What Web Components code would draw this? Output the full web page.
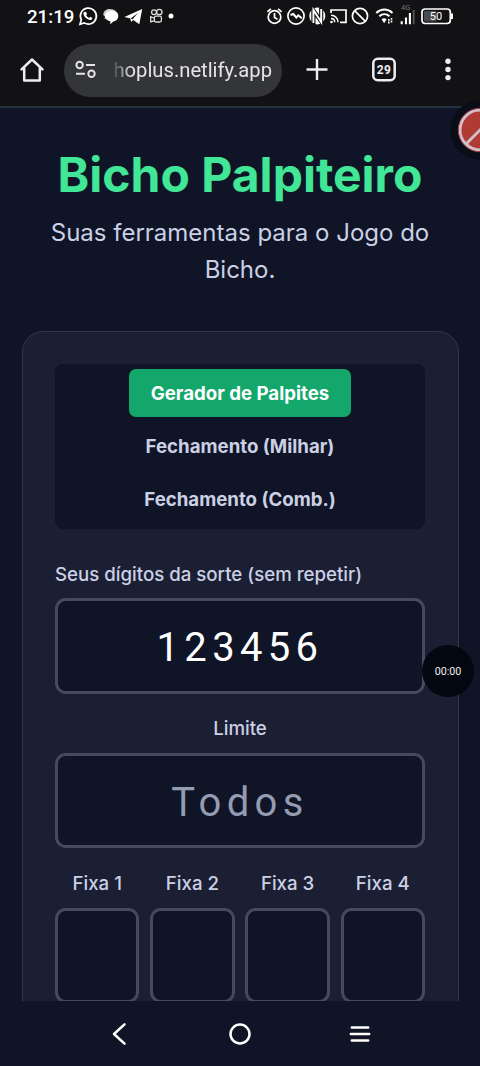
<!DOCTYPE html>
<html lang="pt-BR">
<head>
<meta charset="utf-8">
<title>Bicho Palpiteiro</title>
<style>
html,body{margin:0;height:100%;overflow:hidden;background:#0f1527}
body{font-family:Inter,"Noto Sans",sans-serif}
</style>
</head>
<body>
<phone-screen></phone-screen>
<script>
function define(name, markup) {
  const t = document.createElement('template');
  t.innerHTML = markup;
  customElements.define(name, class extends HTMLElement {
    constructor() {
      super();
      this.attachShadow({mode: 'open'}).append(t.content.cloneNode(true));
    }
  });
}

define('status-bar', `
<style>
:host{display:flex;justify-content:space-between;height:34px;box-sizing:border-box;padding:0 25px 0 27px;color:#fff}
.l{display:flex}
time{font:500 18.700px/35px Roboto,sans-serif;width:50px;white-space:nowrap}
svg{display:block}
text{font-family:Roboto,sans-serif}
</style>
<div class="l"><time>21:19</time>
<svg width="100" height="34" viewBox="77 0 100 34" fill="none" stroke="#fff">
  <path d="M80 24.3l1.3-4.5a8 8 0 1 1 2.9 3.1z" stroke-width="1.7"/>
  <path d="M84.8 11.8l1.3.1.9 2.2-.8 1.1c.8 1.4 1.8 2.2 3 2.7l1-1.1 2.2 1.1c0 1.2-.9 2.1-2.1 2.1-3.3 0-6.9-3.8-6.9-6.4 0-.8.5-1.5 1.400-1.800z" fill="#fff" stroke="none"/>
  <path d="M103.300 15c0-3.500 2.500-6 6.200-6 3.300 0 6.300 1 7 3.500l-2 5-10.300 1.300 1-1.800z" fill="#ccc" stroke="none"/>
  <path d="M105 15.800c0-3.300 2.700-5.400 6.700-5.400s6.600 2.300 6.600 5.400-2.400 5.600-5 5.800l-3 2.700v-3c-3-.6-5.300-2.300-5.300-5.500z" fill="#fff" stroke="none"/>
  <path d="M124.400 16.900L142.200 9l-2.900 15.200-6-4.300-2.200 2.200-.8-3.600zM130.600 18.400l7.400-5.400-5.400 6.300z" fill="#fff" fill-rule="evenodd" stroke="none"/>
  <g stroke="#ddd" stroke-width="1.300"><circle cx="154" cy="12.200" r="2.400"/><circle cx="159.300" cy="12" r="2.700"/><rect x="154.400" y="16.200" width="7" height="5.800" rx="1.500"/><path d="M154 18l-3.300-1.200v5l3.300-1"/></g>
  <circle cx="171" cy="16" r="2.500" fill="#fff" stroke="none"/>
</svg></div>
<svg width="188" height="34" viewBox="267 0 188 34" fill="none" stroke="#fff" stroke-width="1.700">
  <circle cx="274.500" cy="17" r="6.300"/><path d="M274.500 13v4.500l3 1.700M267.400 11.800l3.500-3M281.600 11.800l-3.500-3"/>
  <circle cx="296" cy="16" r="8.100"/><path d="M290.500 15l2.800-1 3 3.500 2-2.200 3.500 3" stroke-width="2"/>
  <ellipse cx="317.300" cy="16" rx="8" ry="8.400" fill="#fff" stroke="none"/>
  <path d="M313.400 24V10.500l7.800 11V8" stroke="#121214" stroke-width="4.200"/><path d="M313.400 23V10l7.800 12V9" stroke-width="1.900"/>
  <path d="M331 13V10h15v12.300h-6"/><path d="M331 15.300c4 0 7 3 7 7M331 18.600c2.300 0 3.700 1.500 3.700 3.700" stroke-width="1.500"/><circle cx="331.500" cy="22" r="1.300" fill="#fff" stroke="none"/>
  <circle cx="360" cy="16" r="7.600"/><path d="M354.600 10.600l10.800 10.800"/>
  <path d="M376.300 12.900c4.700-4.400 11.500-4.400 16.200 0M379.300 16.300c3-2.800 7.200-2.800 10.200 0" stroke-width="2"/><path d="M381.600 19.300c1.500-1.400 3.500-1.400 5 0l-2.500 4z" fill="#fff" stroke="none"/><path d="M388.800 19v4.500M391.500 18v4.500" stroke-width="1.600" stroke-dasharray="1.800 .8"/>
  <text x="401" y="10" font-size="7.500" fill="#777" stroke="none">4G</text>
  <path d="M401.700 21.300v2.900M406 17.500v6.700M409.900 13v11.200" stroke-width="2.100"/><path d="M413.700 10V24.200" stroke="#555" stroke-width="1.800"/>
  <rect x="422" y="9" width="28.300" height="14.500" rx="3.200"/><rect x="424" y="11" width="12.500" height="10.500" rx="1" fill="#4a4a4c" stroke="none"/><path d="M452 13.500v5.500" stroke-width="2"/>
  <text x="436" y="20.300" text-anchor="middle" font-size="11" fill="#fff" stroke="none">50</text>
</svg>`);

define('browser-bar', `
<style>
:host{display:flex;align-items:center;height:72px;box-sizing:border-box;padding:0 20px 0 18px}
.pill{display:flex;align-items:center;width:218px;height:53px;border-radius:27px;background:#343538;margin-left:18px;box-sizing:border-box;padding-left:11px}
.u{font:400 20.200px/28px Roboto,sans-serif;color:#e4e4e8;margin-left:14px;width:161px;display:flex;justify-content:flex-end;white-space:nowrap;-webkit-mask:linear-gradient(90deg,transparent,#000 20px);mask:linear-gradient(90deg,transparent,#000 20px)}
svg{display:block;flex:none}
.plus{margin-left:23px}.tabs{margin-left:42px}.dots{margin-left:47px}
</style>
<svg width="28" height="28" viewBox="0 0 28 28" fill="none" stroke="#ededf2" stroke-width="2.500" stroke-linejoin="round" stroke-linecap="round"><path d="M3.500 13.300L14 3.500l10.500 9.800M6.200 12v12.500h15.600V12"/></svg>
<div class="pill"><svg width="22" height="20" viewBox="0 0 22 20" fill="none" stroke="#e4e4e8" stroke-width="2"><circle cx="4.600" cy="5" r="3.200"/><path d="M11 5h9M1 13.800h9"/><circle cx="16.500" cy="13.800" r="3.200"/></svg><div class="u">hoplus.netlify.app</div></div>
<svg class="plus" width="24" height="24" viewBox="0 0 24 24" stroke="#ededf2" stroke-width="2.400"><path d="M12 1v21M1.500 11.500h21"/></svg>
<svg class="tabs" width="26" height="26" viewBox="0 0 26 26"><rect x="2.300" y="1.800" width="21.400" height="21.400" rx="4.500" fill="none" stroke="#ededf2" stroke-width="2.500"/><text x="13" y="16.800" text-anchor="middle" font-family="Roboto,sans-serif" font-weight="700" font-size="12" letter-spacing=".3" fill="#ededf2">29</text></svg>
<svg class="dots" width="8" height="24" viewBox="0 0 8 24" fill="#ededf2"><circle cx="4" cy="3.200" r="2.700"/><circle cx="4" cy="11.500" r="2.700"/><circle cx="4" cy="19.600" r="2.700"/></svg>`);

define('page-heading', `
<style>
:host{display:block;text-align:center;padding-top:40px}
h1{margin:0;font-size:48px;line-height:53.300px;font-weight:700;color:#41e696;white-space:nowrap}
p{margin:12.700px 21px 0;font-size:24px;line-height:37.330px;color:#cbd0e5}
</style>
<h1><slot name="title"></slot></h1><p><slot></slot></p>`);

define('tab-item', `
<style>
:host{display:block;height:48px;line-height:48px;padding:0 21.300px;border-radius:7px;font-size:18.670px;font-weight:700;color:#cbd0e5;white-space:nowrap}
:host([active]){background:#13a76c;color:#fff;line-height:49px}
</style><slot></slot>`);

define('tab-list', `
<style>
:host{display:flex;flex-direction:column;align-items:center;gap:5.300px;padding:5.300px;height:165px;box-sizing:border-box;border-radius:8px;background:#0f1426}
</style><slot></slot>`);

define('form-field', `
<style>
:host{display:block;min-width:0;text-align:center}
.label{display:block;font-size:18.670px;line-height:26.670px;font-weight:500;color:#cbd0e5;white-space:nowrap}
:host([left]) .label{text-align:left}
.box{margin-top:10px;height:95.500px;box-sizing:border-box;border:3px solid #454a5e;border-radius:10.700px;background:#0f1426;font:400 40px/94px Roboto,sans-serif;letter-spacing:5.330px;color:#fff}
:host([empty]) .box{color:#959bb0;line-height:93px}
</style>
<span class="label"><slot name="label"></slot></span><div class="box"><slot></slot></div>`);

define('form-card', `
<style>
:host{display:block;margin:42px 21.500px 0;height:760px;box-sizing:border-box;border:1.330px solid #323648;border-radius:21.300px;background:#1b1f34;padding:32.300px 32.500px}
.fields{display:flex;flex-direction:column;gap:22.500px;margin-top:32.700px}
.row{display:grid;grid-template-columns:repeat(4,1fr);gap:10.700px}
</style>
<tab-list><tab-item active>Gerador de Palpites</tab-item><tab-item>Fechamento (Milhar)</tab-item><tab-item>Fechamento (Comb.)</tab-item></tab-list>
<div class="fields">
<form-field left><span slot="label">Seus dígitos da sorte (sem repetir)</span>123456</form-field>
<form-field empty><span slot="label">Limite</span>Todos</form-field>
<div class="row">
<form-field><span slot="label">Fixa 1</span></form-field><form-field><span slot="label">Fixa 2</span></form-field><form-field><span slot="label">Fixa 3</span></form-field><form-field><span slot="label">Fixa 4</span></form-field>
</div></div>`);

define('nav-bar', `
<style>
:host{display:flex;justify-content:center;align-items:center;gap:92px;height:65px;background:#0f1527}
svg{display:block}
</style>
<svg width="28" height="28" viewBox="0 0 28 28" fill="none" stroke="#fff" stroke-width="2.500" stroke-linecap="round" stroke-linejoin="round"><path d="M18.500 4.300L8 14 18.500 23.700"/></svg>
<svg width="28" height="28" viewBox="0 0 28 28" fill="none" stroke="#fff" stroke-width="2.500"><circle cx="14" cy="14" r="9.500"/></svg>
<svg width="28" height="28" viewBox="0 0 28 28" fill="none" stroke="#fff" stroke-width="2.500" stroke-linecap="round"><path d="M5.800 7.500h16.400M4.800 14h18.400M5.800 20.500h16.400"/></svg>`);

define('recorder-overlay', `
<style>
:host{position:absolute;inset:0;overflow:hidden;pointer-events:none}
svg{position:absolute;left:449px;top:100px}
.t{position:absolute;left:422px;top:645px;width:52px;height:52px;border-radius:50%;background:#03070f;color:#eee;font:400 10.700px/53px Roboto,sans-serif;text-align:center}
</style>
<svg width="31" height="60" viewBox="449 100 31 60"><circle cx="479.500" cy="130" r="29.500" fill="#090d18"/><circle cx="480" cy="130" r="20" fill="#b03a34" stroke="#d0c0c8" stroke-width="3"/><circle cx="480" cy="130" r="21.800" fill="none" stroke="#a83a42" stroke-width="1"/><path d="M466.500 143.500l27-27" stroke="#d0c0c8" stroke-width="3"/></svg>
<div class="t">00:00</div>`);

define('phone-screen', `
<style>
:host{display:flex;flex-direction:column;position:relative;width:480px;height:1066px;overflow:hidden;background:#0f1527}
header{background:#121214;height:108px;box-sizing:border-box;border-bottom:2px solid #253140;flex:none}
main{height:893px;flex:none;overflow:hidden}
</style>
<header><status-bar></status-bar><browser-bar></browser-bar></header>
<main><page-heading><span slot="title">Bicho Palpiteiro</span>Suas ferramentas para o Jogo do Bicho.</page-heading><form-card></form-card></main>
<nav-bar></nav-bar><recorder-overlay></recorder-overlay>`);
</script>
</body>
</html>
